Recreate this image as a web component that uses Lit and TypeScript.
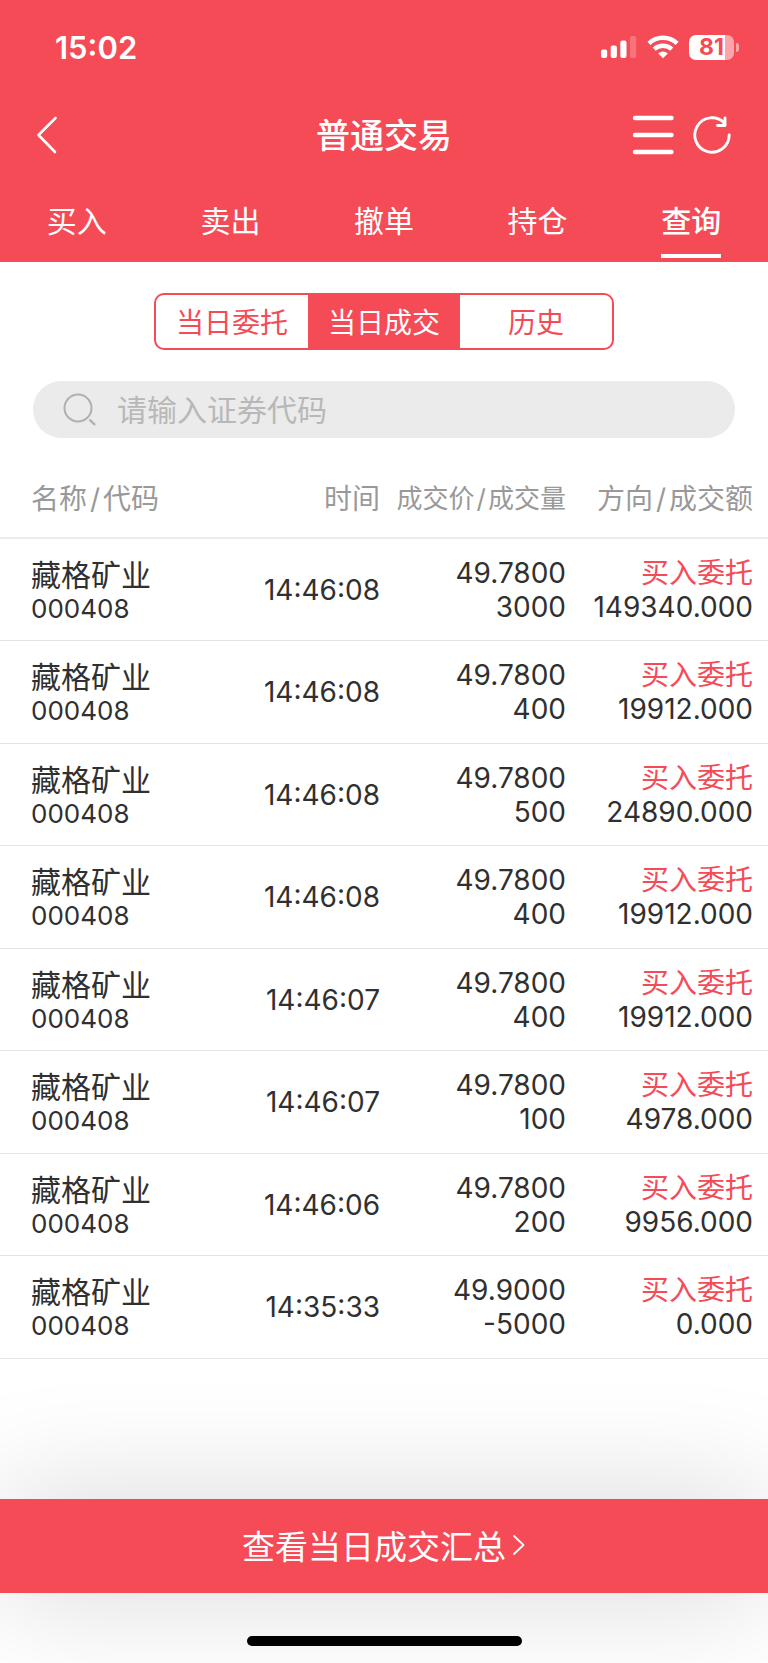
import { LitElement, html, css, svg } from "lit";
import { customElement, state } from "lit/decorators.js";
import { classMap } from "lit/directives/class-map.js";

interface Deal {
  name: string;
  code: string;
  time: string;
  price: string;
  volume: string;
  side: string;
  amount: string;
}

const deal = (time: string, price: string, volume: string, amount: string): Deal => ({
  name: "藏格矿业",
  code: "000408",
  time,
  price,
  volume,
  side: "买入委托",
  amount,
});

const DEALS: Deal[] = [
  deal("14:46:08", "49.7800", "3000", "149340.000"),
  deal("14:46:08", "49.7800", "400", "19912.000"),
  deal("14:46:08", "49.7800", "500", "24890.000"),
  deal("14:46:08", "49.7800", "400", "19912.000"),
  deal("14:46:07", "49.7800", "400", "19912.000"),
  deal("14:46:07", "49.7800", "100", "4978.000"),
  deal("14:46:06", "49.7800", "200", "9956.000"),
  deal("14:35:33", "49.9000", "-5000", "0.000"),
];

const TABS = ["买入", "卖出", "撤单", "持仓", "查询"];
const RANGES = ["当日委托", "当日成交", "历史"];

const signalIcon = svg`<svg width="36" height="24" viewBox="0 0 36 24" fill="#fff" aria-hidden="true">
  <rect x="0" y="14.5" width="6.2" height="8.5" rx="2"/>
  <rect x="9.7" y="10.5" width="6.2" height="12.5" rx="2"/>
  <rect x="19.3" y="5.5" width="6.2" height="17.5" rx="2"/>
  <rect x="29" y="1" width="6.2" height="22" rx="2" opacity=".22"/>
</svg>`;

const wifiIcon = svg`<svg width="32" height="24" viewBox="0 0 32 24" fill="none" stroke="#fff" aria-hidden="true">
  <path d="M1.9 8.4a20.4 20.4 0 0 1 28.2 0" stroke-width="4.4"/>
  <path d="M7.2 14.2a12.8 12.8 0 0 1 17.6 0" stroke-width="4.4"/>
  <path d="M16 23.2l-4.8-4.8a7 7 0 0 1 9.6 0z" fill="#fff" stroke="none"/>
</svg>`;

const backIcon = svg`<svg width="24" height="40" viewBox="0 0 24 40" fill="none" stroke="#fff" stroke-width="2.6" stroke-linecap="round" stroke-linejoin="round" aria-hidden="true">
  <path d="M19.5 3L2.5 20l16.5 17"/>
</svg>`;

const menuIcon = svg`<svg width="42" height="40" viewBox="0 0 42 40" stroke="#fff" stroke-width="4.4" stroke-linecap="round" aria-hidden="true">
  <path d="M3 3h36.500M3 20h36.500M3 37h36.500"/>
</svg>`;

const refreshIcon = svg`<svg width="40" height="40" viewBox="0 0 40 40" fill="none" stroke="#fff" stroke-width="2.9" stroke-linecap="round" stroke-linejoin="round" aria-hidden="true">
  <path d="M37.200 20A17.200 17.200 0 1 1 32.500 8.200"/>
  <path d="M33 3v7.500h-7.500" />
</svg>`;

const searchIcon = svg`<svg width="34" height="34" viewBox="0 0 34 34" fill="none" stroke="#b0b0b0" stroke-width="2" aria-hidden="true">
  <circle cx="15" cy="15" r="13.500"/>
  <path d="M26.500 26.500l5.500 5.500" stroke-width="2.400"/>
</svg>`;

const moreIcon = svg`<svg width="14" height="22" viewBox="0 0 14 22" fill="none" stroke="#fff" stroke-width="1.800" stroke-linecap="round" stroke-linejoin="round" aria-hidden="true">
  <path d="M2 2l9.500 9L2 20"/>
</svg>`;

@customElement("app-root")
export class AppRoot extends LitElement {
  @state() private tab = 4;
  @state() private range = 1;

  static styles = css`
    :host {
      display: flex;
      flex-direction: column;
      min-height: 100vh;
      background: #fff;
      color: #303030;
      font-family: Inter, "Noto Sans CJK SC", sans-serif;
    }
    button,
    input {
      box-sizing: border-box;
      font: inherit;
      color: inherit;
      background: none;
      border: 0;
      margin: 0;
      padding: 0;
    }
    button {
      cursor: pointer;
    }
    svg {
      display: block;
    }
    .top {
      background: #f54b57;
      color: #fff;
    }
    .status {
      display: flex;
      align-items: center;
      justify-content: space-between;
      height: 82px;
      padding: 6px 29px 0 55px;
    }
    .clock {
      font-size: 31px;
      font-weight: 600;
    }
    .indicators {
      display: flex;
      align-items: center;
      gap: 10px;
    }
    .battery {
      display: flex;
      align-items: center;
      gap: 2px;
    }
    .cell {
      display: flex;
      align-items: center;
      justify-content: center;
      width: 45px;
      height: 25px;
      border-radius: 7px;
      background: linear-gradient(90deg, #fff 81%, #fba5ab 81%);
      color: #f54b57;
      font-size: 23px;
      font-weight: 700;
      line-height: 25px;
    }
    .tip {
      width: 3px;
      height: 9px;
      border-radius: 0 4px 4px 0;
      background: #fba5ab;
    }
    .nav {
      display: grid;
      grid-template-columns: 1fr auto 1fr;
      align-items: center;
      height: 94px;
      padding: 0 36px;
    }
    .title {
      margin: 0;
      padding-top: 2px;
      font-size: 34px;
      font-weight: 500;
      line-height: 48px;
    }
    .back {
      justify-self: start;
    }
    .tools {
      display: flex;
      justify-content: flex-end;
      gap: 18px;
    }
    .tabs {
      display: flex;
    }
    .tab {
      position: relative;
      flex: 1;
      height: 80px;
      padding-bottom: 6px;
      font-size: 30px;
    }
    .tab.on {
      font-weight: 500;
    }
    .tab.on::after {
      content: "";
      position: absolute;
      left: calc(50% - 30px);
      bottom: 4px;
      width: 60px;
      height: 4px;
      background: #fff;
    }
    .ranges {
      display: flex;
      width: 60%;
      margin: 31px auto;
      box-sizing: border-box;
      border: 2px solid #f54b57;
      border-radius: 10px;
      overflow: hidden;
    }
    .range {
      flex: 1;
      height: 53px;
      padding-bottom: 2px;
      color: #f54b57;
      font-size: 28px;
    }
    .range.on {
      margin: 0 -1px;
      background: #f54b57;
      color: #fff;
    }
    .search {
      display: flex;
      align-items: center;
      gap: 20px;
      height: 57px;
      margin: 0 33px;
      padding: 0 30px;
      border-radius: 30px;
      background: #ebebeb;
    }
    .query {
      flex: 1;
      min-width: 0;
      height: 57px;
      font-size: 30px;
      outline: none;
    }
    .query::placeholder {
      color: #b8b8b9;
      opacity: 1;
    }
    .deals {
      width: 100%;
      table-layout: fixed;
      border-collapse: separate;
      border-spacing: 0;
    }
    .col {
      width: 186px;
    }
    .col-last {
      width: 202px;
    }
    th,
    td {
      box-sizing: border-box;
      padding: 0;
      border-bottom: 1px solid #e4e4e4;
      text-align: right;
      vertical-align: middle;
      white-space: nowrap;
      font-weight: 400;
    }
    th {
      height: 101px;
      padding-top: 18px;
      border-bottom: 2px solid #ececec;
      color: #999;
      font-size: 28px;
    }
    th.compact {
      font-size: 26px;
    }
    td {
      height: 102px;
      font-size: 28px;
      line-height: 34px;
    }
    tr:nth-child(even) td {
      height: 103px;
    }
    th:first-child,
    td:first-child {
      padding-left: 31px;
      text-align: left;
    }
    td:first-child {
      padding-top: 4px;
    }
    th:last-child,
    td:last-child {
      padding-right: 15px;
    }
    .slash {
      margin: 0 3px;
    }
    .compact .slash {
      margin: 0 2px;
    }
    .line {
      display: block;
    }
    .name {
      font-size: 30px;
    }
    .code {
      font-size: 26px;
    }
    .side {
      color: #f54b57;
    }
    .summary {
      display: flex;
      align-items: center;
      justify-content: center;
      gap: 6px;
      width: 100%;
      height: 94px;
      margin-top: auto;
      padding-bottom: 2px;
      background: #f54b57;
      color: #fff;
      font-size: 33px;
      box-shadow: 0 0 120px rgba(0, 0, 0, 0.17);
    }
    .home {
      display: flex;
      align-items: flex-end;
      justify-content: center;
      height: 53px;
      padding-bottom: 17px;
    }
    .handle {
      width: 275px;
      height: 10px;
      border-radius: 5px;
      background: #000;
      z-index: 1;
    }
  `;

  private pair(first: string, second: string) {
    return html`${first}<span class="slash">/</span>${second}`;
  }

  render() {
    return html`
      <header class="top">
        <div class="status">
          <span class="clock">15:02</span>
          <div class="indicators">
            ${signalIcon} ${wifiIcon}
            <div class="battery"><span class="cell">81</span><span class="tip"></span></div>
          </div>
        </div>
        <div class="nav">
          <button class="back" aria-label="返回">${backIcon}</button>
          <h1 class="title">普通交易</h1>
          <div class="tools">
            <button aria-label="菜单">${menuIcon}</button>
            <button aria-label="刷新">${refreshIcon}</button>
          </div>
        </div>
        <nav class="tabs">
          ${TABS.map(
            (label, i) => html`<button
              class=${classMap({ tab: true, on: i === this.tab })}
              @click=${() => (this.tab = i)}
            >${label}</button>`
          )}
        </nav>
      </header>
      <div class="ranges">
        ${RANGES.map(
          (label, i) => html`<button
            class=${classMap({ range: true, on: i === this.range })}
            @click=${() => (this.range = i)}
          >${label}</button>`
        )}
      </div>
      <label class="search">
        ${searchIcon}
        <input class="query" type="text" placeholder="请输入证券代码" aria-label="证券代码" />
      </label>
      <table class="deals">
        <colgroup>
          <col />
          <col class="col" />
          <col class="col" />
          <col class="col-last" />
        </colgroup>
        <thead>
          <tr>
            <th scope="col">${this.pair("名称", "代码")}</th>
            <th scope="col">时间</th>
            <th scope="col" class="compact">${this.pair("成交价", "成交量")}</th>
            <th scope="col">${this.pair("方向", "成交额")}</th>
          </tr>
        </thead>
        <tbody>
          ${DEALS.map(
            (d) => html`<tr>
              <td><span class="line name">${d.name}</span><span class="line code">${d.code}</span></td>
              <td>${d.time}</td>
              <td><span class="line">${d.price}</span><span class="line">${d.volume}</span></td>
              <td><span class="line side">${d.side}</span><span class="line">${d.amount}</span></td>
            </tr>`
          )}
        </tbody>
      </table>
      <button class="summary">查看当日成交汇总${moreIcon}</button>
      <div class="home"><span class="handle"></span></div>
    `;
  }
}
